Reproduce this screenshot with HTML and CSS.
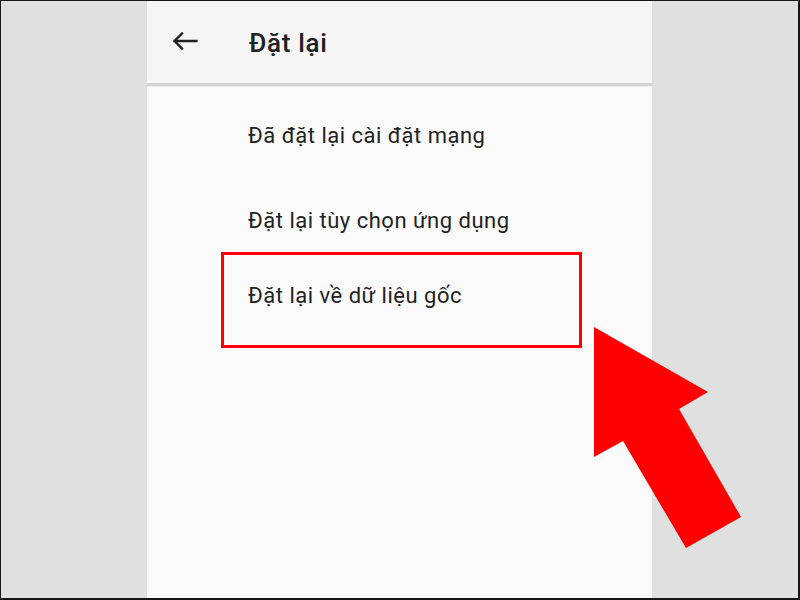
FILE: index.html
```html
<!DOCTYPE html>
<html lang="vi">
<head>
<meta charset="utf-8">
<title>Đặt lại</title>
<link rel="stylesheet" href="styles.css">
</head>
<body>
<div class="frame">
  <div class="screen">
    <header class="appbar">
      <svg class="back" width="28" height="24" viewBox="0 0 28 24" aria-hidden="true">
        <path d="M25.5 12 H3.5 M11 4.5 L3.5 12 L11 19.5" fill="none" stroke="#202020" stroke-width="2.3" stroke-linecap="square" stroke-linejoin="miter"/>
      </svg>
      <h1 class="title">Đặt lại</h1>
    </header>
    <ul class="list">
      <li class="item item-first">Đã đặt lại cài đặt mạng</li>
      <li class="item item-second">Đặt lại tùy chọn ứng dụng</li>
      <li class="item">Đặt lại về dữ liệu gốc</li>
    </ul>
  </div>
  <div class="highlight"></div>
  <svg class="pointer" width="800" height="600" viewBox="0 0 800 600" aria-hidden="true">
    <polygon points="594,327 708,392 679,409 741,517 686,548 623,441 594,457" fill="#ff0000"/>
  </svg>
</div>
</body>
</html>
```

FILE: styles.css
```css
html, body {
  margin: 0;
  padding: 0;
}

body {
  font-family: Roboto, "Noto Sans", "Liberation Sans", sans-serif;
  color: #212121;
}

.frame {
  position: relative;
  width: 800px;
  height: 600px;
  box-sizing: border-box;
  background: #e0e0e0;
  border-top: 1px solid #151515;
  border-left: 1px solid #151515;
  border-right: 2px solid #151515;
  border-bottom: 2px solid #151515;
  overflow: hidden;
  display: flex;
}

.screen {
  margin-left: 146px;
  width: 505px;
  height: 100%;
  background: #fafafa;
  display: flex;
  flex-direction: column;
}

.appbar {
  height: 85px;
  flex: none;
  box-sizing: border-box;
  background: #f5f5f5;
  border-bottom: 3px solid #d4d4d4;
  box-shadow: 0 1px 1px rgba(0, 0, 0, 0.06);
  display: flex;
  align-items: flex-start;
  padding-left: 24px;
}

.back {
  display: block;
  margin-top: 28px;
}

.title {
  margin: 27px 0 0 50px;
  font-size: 26px;
  font-weight: 500;
  line-height: 30px;
  letter-spacing: 0.7px;
  color: #202020;
}

.list {
  list-style: none;
  margin: 0;
  padding: 38px 0 0 101px;
}

.item {
  font-size: 22px;
  line-height: 24px;
  height: 24px;
  letter-spacing: 0.5px;
  color: #222222;
}

.item-first {
  margin-bottom: 61px;
}

.item-second {
  margin-bottom: 51px;
}

.highlight {
  position: absolute;
  left: 220px;
  top: 251px;
  width: 361px;
  height: 96px;
  box-sizing: border-box;
  border: 3px solid #ff0000;
}

.pointer {
  position: absolute;
  left: -1px;
  top: -1px;
}
```
